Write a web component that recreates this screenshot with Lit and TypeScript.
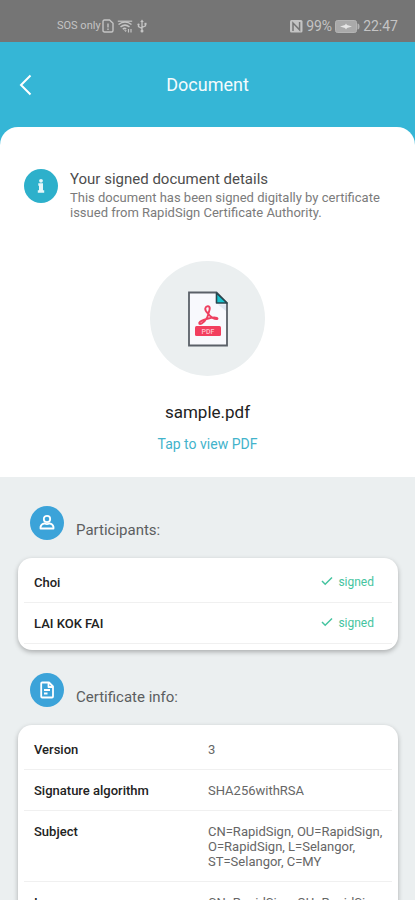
import { LitElement, html, css, svg } from "lit";
import { customElement, property } from "lit/decorators.js";

const PARTICIPANTS = ["Choi", "LAI KOK FAI"];

const CERTIFICATE: [string, string][] = [
  ["Version", "3"],
  ["Signature algorithm", "SHA256withRSA"],
  ["Subject", "CN=RapidSign, OU=RapidSign, O=RapidSign, L=Selangor, ST=Selangor, C=MY"],
  ["Issuer", "CN=RapidSign, OU=RapidSign, O=RapidSign, L=Selangor, ST=Selangor, C=MY"],
];

@customElement("status-bar")
class StatusBar extends LitElement {
  static styles = css`
    :host {
      display: flex;
      align-items: flex-end;
      justify-content: space-between;
      height: 42px;
      box-sizing: border-box;
      padding: 0 17px 7px 57px;
      background: #757575;
      color: #c4c4c4;
      font-size: 14px;
      line-height: 18px;
      flex: none;
    }
    .group {
      display: flex;
      align-items: center;
      height: 18px;
    }
    .carrier {
      font-size: 11px;
    }
    .left {
      gap: 1px;
    }
    .right {
      gap: 3px;
    }
    svg {
      display: block;
    }
    .wifi {
      margin-left: 2px;
    }
    .usb {
      margin-left: 3px;
    }
  `;

  render() {
    return html`
      <div class="group left">
        <span class="carrier">SOS only</span>
        <svg width="12" height="14" viewBox="0 0 12 14" fill="none" stroke="#c4c4c4" stroke-width="1.4">
          <path d="M1 2.5Q1 1 2.5 1H7.5L11 4.2V11.5Q11 13 9.500 13H2.500Q1 13 1 11.500Z" />
          <path d="M6 4.500V8.500M6 9.600V11" />
        </svg>
        <svg class="wifi" width="16" height="14" viewBox="0 0 16 14" fill="none" stroke="#c4c4c4" stroke-width="1.500">
          <path d="M.8 2.200H15.200" stroke-width="1.200" />
          <path d="M1.500 5.500Q8 .5 14.500 5.500M3.500 8Q8 4.200 12.500 8M5.800 10.200Q7.500 8.600 9.200 10" />
          <path d="M7 11L8.500 13L10 11.500Z" fill="#c4c4c4" stroke="none" />
          <path d="M11.500 10V13.500M14 10V13.500" stroke-width="1.200" />
        </svg>
        <svg class="usb" width="10" height="14" viewBox="0 0 10 14" fill="none" stroke="#c4c4c4" stroke-width="1.300">
          <path d="M5 2V11M5 9.500L1.500 7.500V5.500M5 8.500L8.500 6.800V4.500" />
          <path d="M3.200 3L5 .4L6.800 3Z" fill="#c4c4c4" stroke="none" />
          <circle cx="5" cy="12" r="1.500" fill="#c4c4c4" stroke="none" />
          <circle cx="1.500" cy="5.500" r="1.100" fill="#c4c4c4" stroke="none" />
          <path d="M7.500 3.800H9.500V5.800H7.500Z" fill="#c4c4c4" stroke="none" />
        </svg>
      </div>
      <div class="group right">
        <svg width="13" height="13" viewBox="0 0 13 13">
          <path d="M1.500 0H11Q12.500 0 12.500 1.500V11Q12.500 12.500 11 12.500H1.500Q0 12.500 0 11V1.500Q0 0 1.500 0Z" fill="#c4c4c4" />
          <path d="M3 11V3L9.600 9.800V2" fill="none" stroke="#757575" stroke-width="1.500" />
        </svg>
        <span>99%</span>
        <svg width="25" height="13" viewBox="0 0 25 13">
          <rect x=".5" y=".5" width="21" height="12" rx="2" fill="#a9a9a9" stroke="#b4b4b4" />
          <path d="M22.500 3.500Q24.500 3.500 24.500 6.500Q24.500 9.500 22.500 9.500Z" fill="#b4b4b4" />
          <path d="M5 6.500L10 5L11 3.500L12 5L17 6.500L12 8L11 9.500L10 8Z" fill="#e6e6e6" />
        </svg>
        <span>22:47</span>
      </div>
    `;
  }
}

const personIcon = svg`
  <circle cx="9" cy="5" r="3.200" />
  <path d="M2.500 14.500V13Q3 10 6.500 9.300Q9 10.800 11.500 9.300Q15 10 15.500 13V14.500Z" />`;
const fileIcon = svg`
  <path d="M3.200 2.500Q3.200 1.500 4.200 1.500H11L15 5.500V15.500Q15 16.500 14 16.500H4.200Q3.200 16.500 3.200 15.500Z" />
  <path d="M10.500 1.500V6H15" />
  <path d="M6 9H12M6 12.500H9.500" />`;

@customElement("section-heading")
class SectionHeading extends LitElement {
  @property() icon = "person";
  @property() label = "";

  static styles = css`
    :host {
      display: flex;
      align-items: center;
      gap: 12px;
      padding: 0 12px;
    }
    .badge {
      display: grid;
      place-items: center;
      width: 34px;
      height: 34px;
      border-radius: 50%;
      background: #3ba3d9;
      flex: none;
    }
    h2 {
      margin: 0;
      padding-top: 14px;
      font-size: 15px;
      line-height: 20px;
      font-weight: 400;
      color: #5b5e60;
    }
  `;

  render() {
    return html`
      <span class="badge">
        <svg width="18" height="18" viewBox="0 0 18 18" fill="none" stroke="#fff" stroke-width="1.800" stroke-linejoin="round">
          ${this.icon === "person" ? personIcon : fileIcon}
        </svg>
      </span>
      <h2>${this.label}</h2>
    `;
  }
}

@customElement("app-root")
class AppRoot extends LitElement {
  static styles = css`
    :host {
      display: flex;
      flex-direction: column;
      height: 100vh;
      font-family: Roboto, "Noto Sans", sans-serif;
      background: #35b6d6;
      overflow: hidden;
    }
    .bar {
      display: grid;
      grid-template-columns: 40px 1fr 40px;
      align-items: center;
      height: 85px;
      padding: 0 6px;
      flex: none;
    }
    .back {
      display: grid;
      place-items: center;
      height: 40px;
      padding: 0;
      border: 0;
      background: none;
      color: #fff;
      cursor: pointer;
    }
    .title {
      margin: 0;
      font-size: 18px;
      line-height: 24px;
      font-weight: 400;
      color: #f4fbfd;
      text-align: center;
    }
    .scroll {
      flex: 1;
      min-height: 0;
      overflow-y: auto;
      scrollbar-width: none;
      border-radius: 18px 18px 0 0;
      background: #ebeff0;
    }
    .summary {
      padding: 42px 24px 24px;
      background: #fff;
    }
    .intro {
      display: flex;
      gap: 12px;
    }
    .info {
      display: grid;
      place-items: center;
      width: 34px;
      height: 34px;
      border-radius: 50%;
      background: #2db0cb;
      flex: none;
    }
    .intro h2 {
      margin: 0;
      font-size: 15px;
      line-height: 21px;
      font-weight: 400;
      color: #4d4d4d;
    }
    .intro p {
      margin: 0;
      font-size: 13px;
      line-height: 15px;
      color: #7b7b7b;
    }
    .file {
      display: flex;
      flex-direction: column;
      align-items: center;
      margin-top: 41px;
    }
    .disc {
      display: grid;
      place-items: center;
      width: 115px;
      height: 115px;
      border-radius: 50%;
      background: #ebeff0;
    }
    .name {
      margin: 24px 0 0;
      font-size: 17px;
      line-height: 24px;
      color: #222;
    }
    .view {
      margin-top: 11px;
      font-size: 14px;
      line-height: 18px;
      color: #42b3cb;
      text-decoration: none;
    }
    .details {
      padding: 29px 17px 24px 18px;
    }
    .card {
      margin: 18px 0 23px;
      padding: 4px 6px 6px;
      border-radius: 14px;
      background: #fff;
      box-shadow: 0 2px 5px rgba(0, 0, 0, 0.28);
    }
    table {
      width: 100%;
      border-collapse: collapse;
      table-layout: fixed;
      font-size: 13px;
      line-height: 15px;
      color: #666;
    }
    th,
    td {
      padding: 13px 10px 12px;
      border-bottom: 1px solid #f0f0f0;
      text-align: left;
      vertical-align: top;
      font-weight: 400;
    }
    th {
      font-weight: 500;
      color: #222;
    }
    .facts th {
      width: 154px;
    }
    .facts td {
      padding-right: 2px;
    }
    .state {
      padding-right: 18px;
      font-size: 12px;
      text-align: right;
      color: #45c4a0;
    }
    .state svg {
      margin-right: 2px;
    }
  `;

  render() {
    return html`
      <status-bar></status-bar>
      <header class="bar">
        <button class="back" aria-label="Back">
          <svg width="14" height="22" viewBox="0 0 14 22" fill="none" stroke="currentColor" stroke-width="2">
            <path d="M11.500 1.500L2 11L11.500 20.500" />
          </svg>
        </button>
        <h1 class="title">Document</h1>
      </header>
      <main class="scroll">
        <section class="summary">
          <div class="intro">
            <span class="info">
              <svg width="8" height="16" viewBox="0 0 8 16" fill="#e6f7fa">
                <circle cx="4" cy="2.800" r="1.900" />
                <path d="M1.300 5.300H6V12.300H7.200V14.800H.8V12.300H2V7.800H1.300Z" />
              </svg>
            </span>
            <div>
              <h2>Your signed document details</h2>
              <p>This document has been signed digitally by certificate issued from RapidSign Certificate Authority.</p>
            </div>
          </div>
          <div class="file">
            <div class="disc">
              <svg width="42" height="56" viewBox="0 0 42 56">
                <path d="M2 1.500H29.500L40 12V54.500H2Z" fill="#f8f9fd" stroke="#5a6068" stroke-width="1.800" />
                <path d="M29.500 2V12H40Z" fill="#19c3cf" stroke="#29464f" stroke-width="1.600" stroke-linejoin="round" />
                <path d="M31 13.500H39V20Z" fill="#dfe6f2" />
                <g fill="none" stroke="#ee4060" stroke-width="1.900" stroke-linecap="round" stroke-linejoin="round">
                  <path d="M21 22.500Q17.800 19.500 18.300 17.200Q19 15 21 15.200Q23.300 15.800 22.600 18.600Q22 21 21.200 23.500L20.200 26.500Q17.500 31 14.500 32.600Q12 33.600 12.300 31.800Q13.500 29.600 19.500 28L25 26.600Q30 26 30.500 27.600Q29.500 29 25.500 26.800Q22.200 24.500 21 22.500" />
                </g>
                <rect x="8" y="35" width="26" height="10" rx="1.500" fill="#f23e5e" />
                <text x="21" y="43" text-anchor="middle" font-size="7" font-weight="500" fill="#ffc2cd">PDF</text>
              </svg>
            </div>
            <p class="name">sample.pdf</p>
            <a class="view" href="#pdf">Tap to view PDF</a>
          </div>
        </section>
        <div class="details">
          <section-heading icon="person" label="Participants:"></section-heading>
          <div class="card">
            <table aria-label="Participants">
              ${PARTICIPANTS.map(
                (name) => html`<tr>
                  <th scope="row">${name}</th>
                  <td class="state">
                    <svg width="12" height="10" viewBox="0 0 12 10" fill="none" stroke="currentColor" stroke-width="1.500">
                      <path d="M1 5L4.200 8.200L11 1.500" />
                    </svg>
                    signed
                  </td>
                </tr>`
              )}
            </table>
          </div>
          <section-heading icon="file" label="Certificate info:"></section-heading>
          <div class="card">
            <table class="facts" aria-label="Certificate info">
              ${CERTIFICATE.map(
                ([key, value]) => html`<tr>
                  <th scope="row">${key}</th>
                  <td>${value}</td>
                </tr>`
              )}
            </table>
          </div>
        </div>
      </main>
    `;
  }
}
